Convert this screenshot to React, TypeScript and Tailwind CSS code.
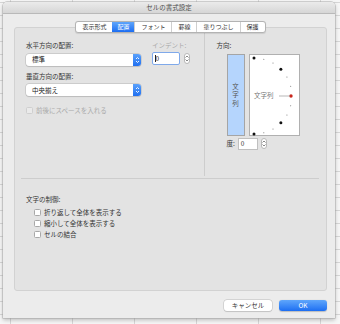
import { memo } from "react";

const tabs = ["表示形式", "配置", "フォント", "罫線", "塗りつぶし", "保護"];

function SelectArrows() {
	return (
		<svg width="5" height="8" viewBox="0 0 5 8" fill="none">
			<path d="M1 3L2.5 1.5L4 3" stroke="white" strokeWidth="0.9" />
			<path d="M1 5L2.5 6.5L4 5" stroke="white" strokeWidth="0.9" />
		</svg>
	);
}

function Select({ value }: { value: string }) {
	return (
		<div className="flex h-[12px] w-[115px] items-center rounded-[3px] bg-white shadow-[0_0_0_0.5px_#b8b8b8,0_0.5px_1px_rgba(0,0,0,0.15)]">
			<span className="flex-1 pl-[6px] text-[6.5px] text-[#222]">{value}</span>
			<div className="flex h-full w-[8px] items-center justify-center rounded-r-[3px] bg-gradient-to-b from-[#5aa1fb] to-[#1f6ff0]">
				<SelectArrows />
			</div>
		</div>
	);
}

function Stepper() {
	return (
		<div className="flex h-[11px] w-[6px] flex-col items-center justify-center gap-[1px] rounded-[3px] border-[0.5px] border-[#b8b8b8] bg-white">
			<svg width="4" height="3" viewBox="0 0 4 3">
				<path d="M0.5 2.5L2 1L3.5 2.5" stroke="#555" strokeWidth="0.7" fill="none" />
			</svg>
			<svg width="4" height="3" viewBox="0 0 4 3">
				<path d="M0.5 0.5L2 2L3.5 0.5" stroke="#555" strokeWidth="0.7" fill="none" />
			</svg>
		</div>
	);
}

function Check({ label, disabled }: { label: string; disabled?: boolean }) {
	return (
		<div className="flex h-[11px] items-center gap-[3px]">
			<span
				className={
					disabled
						? "h-[7px] w-[7px] rounded-[1.5px] border-[0.5px] border-[#cfcfcf] bg-[#eaeaea]"
						: "h-[7px] w-[7px] rounded-[1.5px] border-[0.5px] border-[#a8a8a8] bg-white"
				}
			/>
			<span className={disabled ? "text-[6.5px] text-[#aaaaaa]" : "text-[6.5px] text-[#333]"}>{label}</span>
		</div>
	);
}

// orientation dial: centre at left edge, radius 38
function Dial() {
	const cx = 4;
	const cy = 41;
	const r = 38;
	const angles = [-90, -75, -60, -45, -30, -15, 0, 15, 30, 45, 60, 75, 90];
	return (
		<svg width="50" height="82" viewBox="0 0 50 82">
			{angles.map((a) => {
				const x = cx + r * Math.cos((a * Math.PI) / 180);
				const y = cy + r * Math.sin((a * Math.PI) / 180);
				if (a === 0) return <circle key={a} cx={x - 1} cy={y} r="1.7" fill="#c8261c" />;
				if (a % 45 === 0) return <circle key={a} cx={a === 90 || a === -90 ? x : x} cy={y} r="1.5" fill="#111" />;
				return <circle key={a} cx={x} cy={y} r="0.5" fill="#666" />;
			})}
			<text x="4" y="43.3" fontSize="6.5" fill="#777" fontFamily="'Noto Sans CJK JP', sans-serif">
				文字列
			</text>
			<line x1="29" y1="41" x2="40" y2="41" stroke="#888" strokeWidth="0.6" />
		</svg>
	);
}

export default memo(function App() {
	return (
		<div className="h-[324px] w-[340px] overflow-hidden bg-[#f6f6f6] bg-[linear-gradient(to_right,#d6d6d6_1px,transparent_1px),linear-gradient(to_bottom,#d6d6d6_1px,transparent_1px)] bg-[size:62px_13px] bg-[position:10px_2px] pl-[3px] pt-[2px] font-['Noto_Sans_CJK_JP',sans-serif] leading-none">
			<div className="flex h-[316px] w-[332px] flex-col overflow-hidden rounded-t-[4px] bg-[#ececec] shadow-[0_0_0_0.5px_#a9a9a9,0_2px_4px_rgba(0,0,0,0.25)]">
				{/* title bar */}
				<div className="flex h-[12px] items-center justify-center border-b-[0.5px] border-[#b9b9b9] bg-gradient-to-b from-[#ebebeb] to-[#d6d6d6]">
					<span className="text-[6.5px] text-[#4d4d4d]">セルの書式設定</span>
				</div>

				<div className="flex flex-col pl-[11px] pr-[8px]">
					{/* tabs */}
					<div className="relative z-10 mt-[7px] flex h-[12px] justify-center">
						<div className="flex h-full overflow-hidden rounded-[3px] border-[0.5px] border-[#b3b3b3] bg-white shadow-[0_0.5px_1px_rgba(0,0,0,0.1)]">
							{tabs.map((t, i) => (
								<div
									key={t}
									className={
										i === 1
											? "flex items-center bg-gradient-to-b from-[#5fa5fb] to-[#1b6df2] px-[5px] text-[6px] text-white"
											: "flex items-center border-l-[0.5px] border-[#cfcfcf] px-[6px] text-[6px] text-[#333] first:border-l-0"
									}
								>
									{t}
								</div>
							))}
						</div>
					</div>

					{/* panel */}
					<div className="-mt-[6px] flex h-[264px] flex-col rounded-[3px] border-[0.5px] border-[#d2d2d2] bg-[#e3e3e3]">
						<div className="flex h-[150px]">
							{/* left */}
							<div className="flex w-[189px] flex-col pl-[11px] pt-[14px]">
								<div className="flex gap-[11px]">
									<div className="flex w-[115px] flex-col">
										<span className="text-[6.5px] text-[#333]">水平方向の配置:</span>
										<div className="mt-[5px]">
											<Select value="標準" />
										</div>
									</div>
									<div className="flex flex-col">
										<span className="text-[6.5px] text-[#a8a8a8]">インデント:</span>
										<div className="mt-[3.5px] flex items-center gap-[4px]">
											<div className="flex h-[13px] w-[28px] items-center rounded-[2px] border-[1.5px] border-[#7fa9ea] bg-white pl-[1.5px]">
												<span className="border-l-[0.5px] border-[#222] text-[6.5px] text-[#222]">0</span>
											</div>
											<Stepper />
										</div>
									</div>
								</div>
								<span className="mt-[7px] text-[6.5px] text-[#333]">垂直方向の配置:</span>
								<div className="mt-[5px]">
									<Select value="中央揃え" />
								</div>
								<div className="mt-[9px]">
									<Check label="前後にスペースを入れる" disabled />
								</div>
							</div>
							{/* divider */}
							<div className="mt-[3px] h-[145px] w-[0.5px] bg-[#cdcdcd]" />
							{/* right */}
							<div className="flex flex-col pl-[12px] pt-[14px]">
								<span className="text-[6.5px] text-[#333]">方向:</span>
								<div className="ml-[10px] mt-[5px] flex gap-[4px]">
									<div className="flex h-[82px] w-[18px] flex-col items-center justify-center gap-[2px] border-[0.5px] border-[#a5a5a5] bg-[#b5d5fd] text-[6.5px] text-[#555]">
										<span>文</span>
										<span>字</span>
										<span>列</span>
									</div>
									<div className="h-[82px] w-[51px] border-[0.5px] border-[#b0b0b0] bg-white">
										<Dial />
									</div>
								</div>
								<div className="ml-[10px] mt-[2px] flex items-center">
									<span className="text-[6.5px] text-[#333]">度:</span>
									<div className="ml-[3px] flex h-[12px] w-[20px] items-center border-[0.5px] border-[#c0c0c0] bg-white pl-[2px] text-[6.5px] text-[#333]">
										0
									</div>
									<div className="ml-[3px]">
										<Stepper />
									</div>
								</div>
							</div>
						</div>

						<div className="ml-[6px] mr-[7px] h-[0.5px] bg-[#cdcdcd]" />

						<div className="flex flex-col pl-[11px] pt-[17px]">
							<span className="text-[6.5px] text-[#333]">文字の制御:</span>
							<div className="ml-[8px] mt-[5px] flex flex-col">
								<Check label="折り返して全体を表示する" />
								<Check label="縮小して全体を表示する" />
								<Check label="セルの結合" />
							</div>
						</div>
					</div>

					{/* buttons */}
					<div className="mt-[9px] flex justify-end gap-[7px]">
						<button className="flex h-[11px] w-[48px] items-center justify-center rounded-[3px] bg-white text-[6.5px] text-[#333] shadow-[0_0_0_0.5px_#bdbdbd,0_0.5px_1px_rgba(0,0,0,0.15)]">
							キャンセル
						</button>
						<button className="flex h-[11px] w-[48px] items-center justify-center rounded-[3px] bg-gradient-to-b from-[#5fa6fb] to-[#1c6ef2] text-[6.5px] text-white shadow-[0_0.5px_1px_rgba(0,0,0,0.2)]">
							OK
						</button>
					</div>
				</div>
			</div>
		</div>
	);
});
